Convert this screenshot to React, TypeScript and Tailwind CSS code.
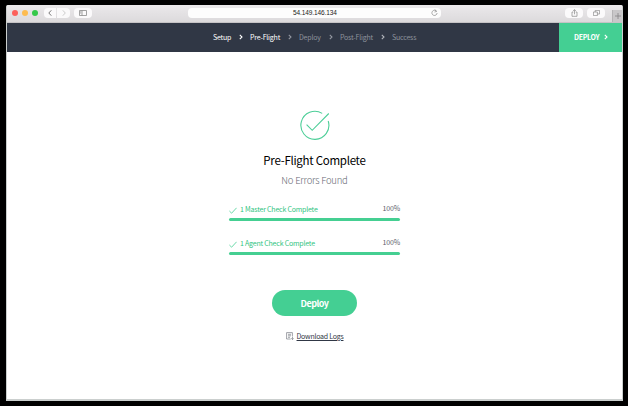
import React from "react";

const steps = [
  { label: "Setup", width: "w-[37px]", tone: "text-white", arrow: "text-white" },
  { label: "Pre-Flight", width: "w-[49px]", tone: "text-white", arrow: "text-[#9296a0]" },
  { label: "Deploy", width: "w-[41px]", tone: "text-[#8d929c]", arrow: "text-[#9296a0]" },
  { label: "Post-Flight", width: "w-[52px]", tone: "text-[#8d929c]", arrow: "text-[#b0b3ba]" },
  { label: "Success", width: "w-[30px]", tone: "text-[#8d929c]", arrow: "" },
];

const checks = ["1 Master Check Complete", "1 Agent Check Complete"];

function Chevron({ className = "" }: { className?: string }) {
  return (
    <svg viewBox="0 0 4 6" className={`h-[6px] w-[4px] shrink-0 ${className}`} fill="none" stroke="currentColor" strokeWidth="1.1">
      <path d="M.8.8 3 3 .8 5.2" />
    </svg>
  );
}

function TitleBar() {
  return (
    <div className="flex h-[18px] shrink-0 items-start border-b border-[#c5c3c5] bg-gradient-to-b from-[#ebe9eb] to-[#dcdadc]">
      <div className="flex gap-1 pt-[5px] pl-[5px]">
        <i className="h-[6px] w-[6px] rounded-full bg-[#fc615c]" />
        <i className="h-[6px] w-[6px] rounded-full bg-[#fdbc50]" />
        <i className="h-[6px] w-[6px] rounded-full bg-[#34c84a]" />
      </div>
      <div className="mt-[3px] ml-[6px] flex h-[10px] gap-px">
        <div className="flex w-[12px] items-center justify-center rounded-l-sm bg-[#fbfafb]">
          <svg viewBox="0 0 4 6" className="h-[6px] w-[4px]" fill="none" stroke="#777" strokeWidth="1"><path d="M3.3.3.8 3l2.5 2.7" /></svg>
        </div>
        <div className="flex w-[13px] items-center justify-center rounded-r-sm bg-[#fbfafb]">
          <svg viewBox="0 0 4 6" className="h-[6px] w-[4px]" fill="none" stroke="#ccc" strokeWidth="1"><path d="m.8.3 2.5 2.7L.8 5.7" /></svg>
        </div>
      </div>
      <div className="mt-[3px] ml-[4px] flex h-[10px] w-[18px] items-center justify-center rounded-sm bg-[#fbfafb]">
        <svg viewBox="0 0 8 6" className="h-[6px] w-[8px]" fill="none" stroke="#8b8b8b" strokeWidth=".8"><path d="M.5.5h7v5h-7zM3 .5v5M1.2 1.8h1M1.2 3h1" /></svg>
      </div>
      <div className="mt-[3px] ml-[96px] flex h-[10px] w-[253px] items-center rounded-sm bg-[#fdfdfd] pr-[3px]">
        <span className="ml-[105px] w-[44px] shrink-0 whitespace-nowrap font-['Liberation_Sans',sans-serif] text-[6.5px] leading-[10px] tracking-[-0.1px] text-[#222]">54.149.146.134</span>
        <svg viewBox="0 0 7 8" className="ml-auto h-[8px] w-[7px]" fill="none" stroke="#888" strokeWidth=".7"><path d="M5.5 2.2A2.6 2.6 0 1 0 6.1 4M3.7.5l1.9 1.8-2.1.8" /></svg>
      </div>
      <div className="mt-[3px] ml-[124px] flex h-[10px] w-[18px] items-center justify-center rounded-sm bg-[#fbfafb]">
        <svg viewBox="0 0 7 8" className="h-[8px] w-[7px]" fill="none" stroke="#888" strokeWidth=".7"><path d="M2.3 3H1v4.3h5V3H4.7M3.5 5.3V.7M2.1 2 3.5.6 4.9 2" /></svg>
      </div>
      <div className="mt-[3px] ml-[4px] flex h-[10px] w-[18px] items-center justify-center rounded-sm bg-[#fbfafb]">
        <svg viewBox="0 0 7 6" className="h-[6px] w-[7px]" fill="none" stroke="#888" strokeWidth=".7"><path d="M.4 2h4v3.6h-4zM2.2 2V.4h4.4V4H4.4" /></svg>
      </div>
      <div className="mt-[5px] ml-auto flex h-[12px] w-[10px] items-center justify-center border-l border-[#b5b3b5] bg-[#c9c7c9]">
        <svg viewBox="0 0 6 6" className="h-[6px] w-[6px]" stroke="#858385" strokeWidth=".8"><path d="M3 0v6M0 3h6" /></svg>
      </div>
    </div>
  );
}

function CheckRow({ label }: { label: string }) {
  return (
    <div className="h-[34px] w-[171px]">
      <div className="flex h-[14px] items-center">
        <svg viewBox="0 0 8 7" className="mt-[3px] h-[7px] w-[8px]" fill="none" stroke="#45d093" strokeWidth=".8"><path d="M.4 4 2.6 6.2 7.6.8" /></svg>
        <span className="ml-[3px] whitespace-nowrap text-[7px] tracking-[-0.2px] text-[#2fc481]">{label}</span>
        <span className="-mt-px ml-auto text-[7px] tracking-[-0.15px] text-[#5c606b]">100%</span>
      </div>
      <div className="mt-[2px] h-[3px] rounded-full bg-[#45cf92]" />
    </div>
  );
}

export default function App() {
  return (
    <div className="h-[406px] w-[628px] overflow-hidden bg-black pt-[5px] pl-[6px] font-['Noto_Sans_CJK_SC',sans-serif]">
      <div className="flex h-[396px] w-[617px] flex-col overflow-hidden rounded-t-[2px] border-r border-b-2 border-l border-[#cbcfce] bg-white">
        <TitleBar />
        <nav className="flex h-[29px] shrink-0 items-center bg-[#303745]">
          <div className="-mt-px ml-[206px] flex">
            {steps.map((s) => (
              <div key={s.label} className={`flex items-center whitespace-nowrap text-[7px] leading-[10px] tracking-[-0.2px] ${s.width}`}>
                <span className={s.tone}>{s.label}</span>
                {s.arrow && <Chevron className={`mr-[7px] ml-auto ${s.arrow}`} />}
              </div>
            ))}
          </div>
          <button className="ml-auto flex h-full w-[63px] items-center bg-[#44cf93] pb-px pl-[15px] text-[7px] font-bold tracking-[-0.3px] text-white">
            <span className="w-[30px] text-left">DEPLOY</span>
            <Chevron />
          </button>
        </nav>
        <main className="flex flex-col items-center pt-[58px]">
          <svg viewBox="0 0 30 30" className="h-[30px] w-[30px]" fill="none" stroke="#4dce98" strokeWidth="1.1">
            <path d="M22.2 3.4A14 14 0 1 0 28.2 11M6.6 14.7l5.6 5.6L28.8 3.5" />
          </svg>
          <h1 className="mt-[10px] text-[11.5px] leading-[20px] tracking-[-0.27px] text-black">Pre-Flight Complete</h1>
          <p className="text-[9.5px] leading-[20px] font-light tracking-[-0.22px] text-[#666a73]">No Errors Found</p>
          <div className="mt-[12px] flex flex-col">
            {checks.map((c) => <CheckRow key={c} label={c} />)}
          </div>
          <button className="mt-[20px] h-[26px] w-[85px] rounded-full bg-[#44cf93] pt-px text-[9px] font-bold tracking-[-0.5px] text-white">Deploy</button>
          <a className="mt-[14px] flex h-[12px] items-center gap-[3px]">
            <svg viewBox="0 0 8 8" className="h-[8px] w-[8px]" fill="none" stroke="#777b84" strokeWidth=".7"><path d="M4.7 7H.6V.6h5.8V4M2 2.3h3M2 3.8h3M2 5.3h2M6.5 4.5v3M5.2 6.3l1.3 1.3 1.3-1.3" /></svg>
            <span className="text-[7px] leading-[12px] tracking-[-0.24px] text-[#303745] underline underline-offset-1">Download Logs</span>
          </a>
        </main>
      </div>
    </div>
  );
}
